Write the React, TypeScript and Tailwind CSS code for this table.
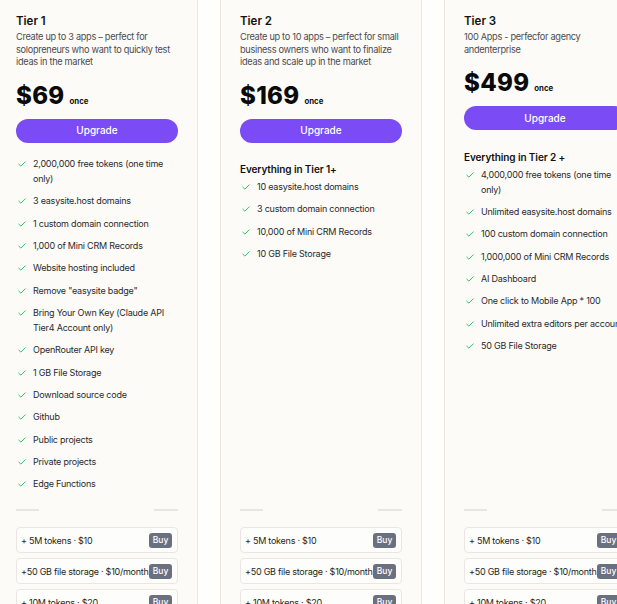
import React from "react";

type Tier = {
  name: string;
  desc: string[];
  price: string;
  heading?: string;
  features: string[][];
};

const tiers: Tier[] = [
  {
    name: "Tier 1",
    desc: [
      "Create up to 3 apps – perfect for",
      "solopreneurs who want to quickly test",
      "ideas in the market",
    ],
    price: "$69",
    features: [
      ["2,000,000 free tokens (one time", "only)"],
      ["3 easysite.host domains"],
      ["1 custom domain connection"],
      ["1,000 of Mini CRM Records"],
      ["Website hosting included"],
      ["Remove \"easysite badge\""],
      ["Bring Your Own Key (Claude API", "Tier4 Account only)"],
      ["OpenRouter API key"],
      ["1 GB File Storage"],
      ["Download source code"],
      ["Github"],
      ["Public projects"],
      ["Private projects"],
      ["Edge Functions"],
    ],
  },
  {
    name: "Tier 2",
    desc: [
      "Create up to 10 apps – perfect for small",
      "business owners who want to finalize",
      "ideas and scale up in the market",
    ],
    price: "$169",
    heading: "Everything in Tier 1+",
    features: [
      ["10 easysite.host domains"],
      ["3 custom domain connection"],
      ["10,000 of Mini CRM Records"],
      ["10 GB File Storage"],
    ],
  },
  {
    name: "Tier 3",
    desc: ["100 Apps - perfecfor agency", "andenterprise"],
    price: "$499",
    heading: "Everything in Tier 2 +",
    features: [
      ["4,000,000 free tokens (one time", "only)"],
      ["Unlimited easysite.host domains"],
      ["100 custom domain connection"],
      ["1,000,000 of Mini CRM Records"],
      ["AI Dashboard"],
      ["One click to Mobile App * 100"],
      ["Unlimited extra editors per account"],
      ["50 GB File Storage"],
    ],
  },
];

const addons = [
  "+ 5M tokens · $10",
  "+50 GB file storage · $10/month",
  "+ 10M tokens · $20",
  "+ 25M tokens · $45",
];

function CheckIcon() {
  return (
    <svg width="8" height="6" viewBox="0 0 8 6" fill="none" className="mt-[1px]">
      <path d="M0.8 3.2 L2.9 5.1 L7.2 0.9" stroke="#34c46a" strokeWidth="1" strokeLinecap="round" strokeLinejoin="round" />
    </svg>
  );
}

function Card({ tier }: { tier: Tier }) {
  return (
    <div className="w-[202px] shrink-0 flex flex-col bg-[#fcfbf7] border border-[#ebe7df] rounded-[8px] px-[19px] pt-[20px]">
      <div className="text-[11.5px] leading-[20px] font-semibold text-[#111111]">{tier.name}</div>
      <div className="text-[9.2px] leading-[12.5px] tracking-[-0.3px] text-[#4b4b52] whitespace-nowrap">
        {tier.desc.map((l, i) => (
          <div key={i}>{l}</div>
        ))}
      </div>
      <div className="mt-[12px] h-[30px] flex items-baseline gap-[5px]">
        <span className="text-[24px] leading-[30px] font-extrabold text-[#0a0a0a] tracking-[0.3px]">{tier.price}</span>
        <span className="text-[7.8px] font-bold text-[#111111]">once</span>
      </div>
      <button className="mt-[8px] h-[24px] w-full rounded-full bg-[#7b4cf6] text-white text-[10px] font-medium">
        Upgrade
      </button>
      {tier.heading ? (
        <div className="mt-[19.5px] text-[10px] leading-[15px] font-semibold tracking-[-0.1px] text-[#111111]">{tier.heading}</div>
      ) : null}
      <div className={`${tier.heading ? "mt-[2px]" : "mt-[13.5px]"} flex flex-col gap-[7.35px]`}>
        {tier.features.map((f, i) => (
          <div key={i} className="flex items-start">
            <div className="w-[17px] shrink-0 h-[15px] flex items-center pl-[1.5px]">
              <CheckIcon />
            </div>
            <div className="text-[9px] leading-[15px] tracking-[-0.22px] text-[#2a2a2e] whitespace-nowrap">
              {f.map((l, j) => (
                <div key={j}>{l}</div>
              ))}
            </div>
          </div>
        ))}
      </div>
      <div className="mt-auto pt-[18px]">
        <div className="flex justify-between h-[1px]">
          <div className="w-[23px] h-[1.5px] bg-[#e9e6e0]" />
          <div className="w-[24px] h-[1.5px] bg-[#e9e6e0]" />
        </div>
        <div className="mt-[17px] flex flex-col gap-[5px] pb-[10px]">
          {addons.map((a, i) => (
            <div
              key={i}
              className="h-[26px] border border-[#ebe7e0] rounded-[4px] bg-[#fdfdfb] flex items-center justify-between pl-[4px] pr-[5px]"
            >
              <span className="text-[9px] tracking-[-0.25px] text-[#1f1f22] whitespace-nowrap">{a}</span>
              <span className="w-[23px] h-[15px] shrink-0 rounded-[3px] bg-[#6b7080] text-white text-[8.5px] font-medium flex items-center justify-center">
                Buy
              </span>
            </div>
          ))}
        </div>
      </div>
    </div>
  );
}

export default function App() {
  return (
    <div
      className="w-[617px] h-[604px] overflow-hidden bg-[#fefefd]"
      style={{ fontFamily: "Inter, 'Noto Sans', sans-serif" }}
    >
      <div className="flex gap-[22px] ml-[-4px] mt-[-10px] items-stretch">
        {tiers.map((t) => (
          <Card key={t.name} tier={t} />
        ))}
      </div>
    </div>
  );
}
